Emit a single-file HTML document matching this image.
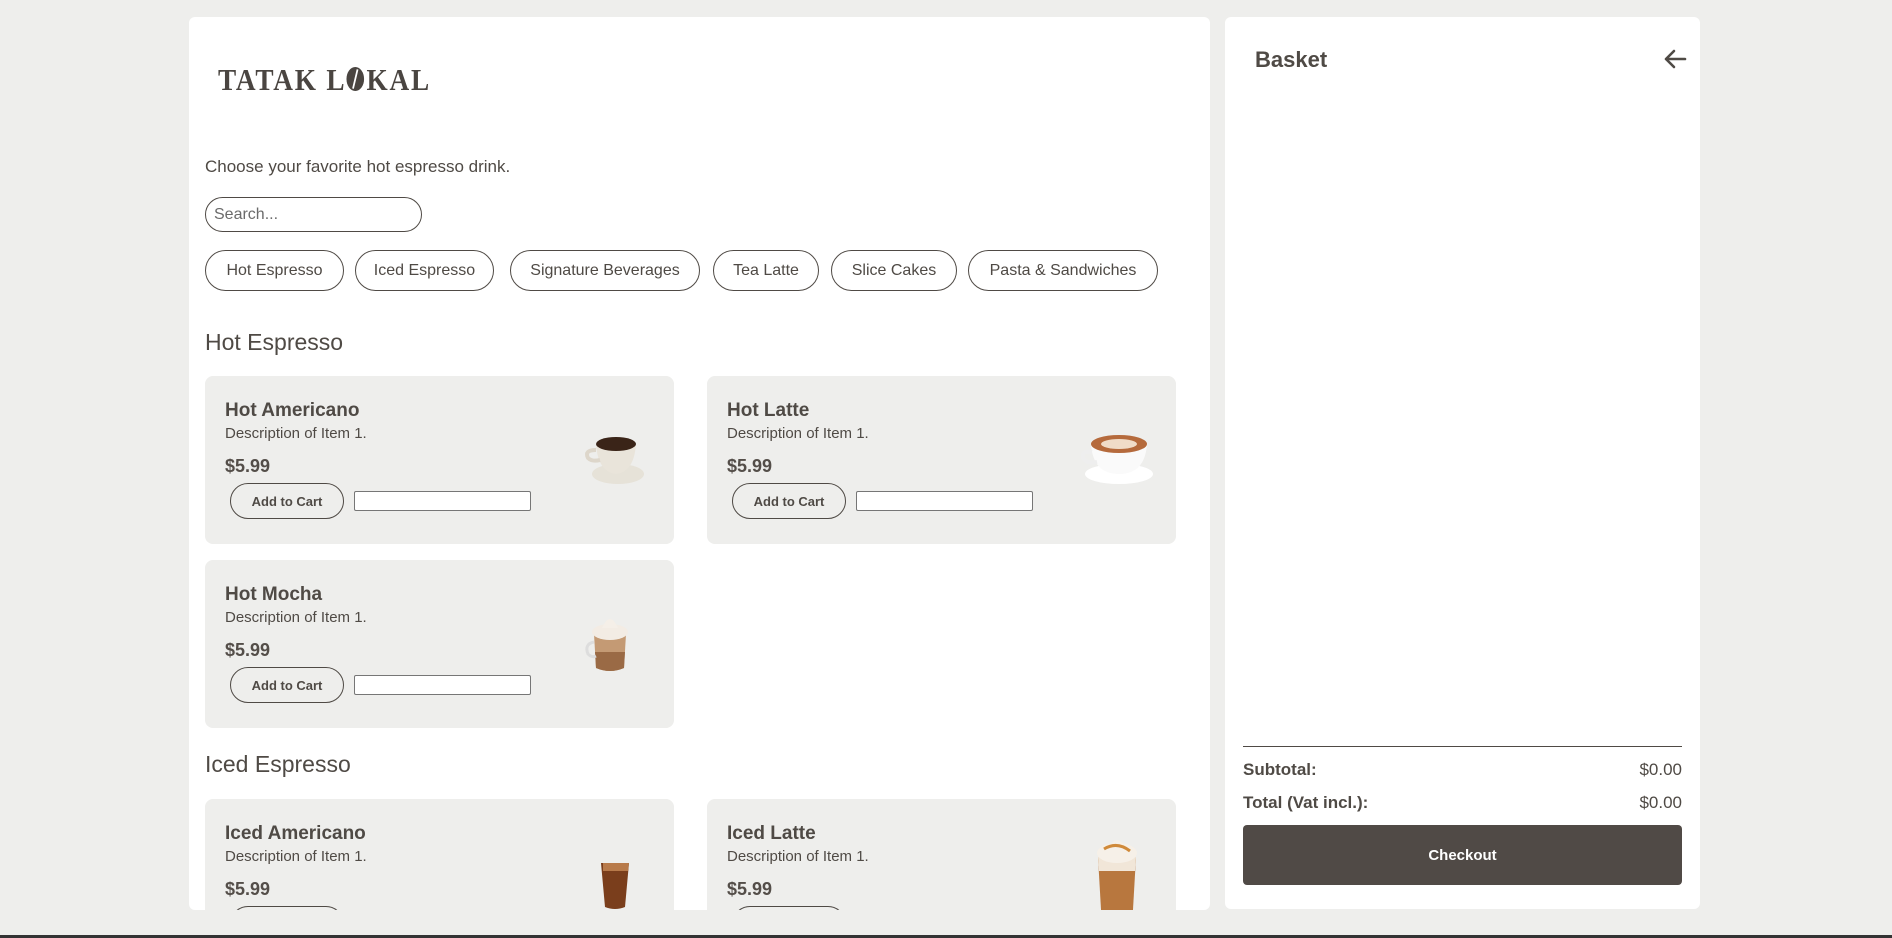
<!DOCTYPE html>
<html><head><meta charset="utf-8"><style>
*{box-sizing:border-box;margin:0;padding:0}
body{width:1892px;height:938px;background:#eeeeec;font-family:"Liberation Sans",sans-serif;color:#4f4a45;position:relative;overflow:hidden}
.abs{position:absolute}
.panel{position:absolute;background:#fff;border-radius:6px;overflow:hidden}
.logo{left:29px;top:45px;font-family:"Liberation Sans Narrow","Liberation Serif",serif;font-weight:bold;font-size:31px;letter-spacing:2px;transform:scaleX(.88);transform-origin:left;color:#4a4541}
.chip{position:absolute;top:233px;height:41px;border:1px solid #4f4a45;border-radius:21px;font-size:16px;display:flex;align-items:center;justify-content:center}
.h2{font-size:23px;font-weight:300;color:#4f4a45}
.card{position:absolute;width:469px;height:168px;background:#eeeeec;border-radius:8px}
.card .t{position:absolute;left:20px;top:24px;font-size:19px;font-weight:bold}
.card .d{position:absolute;left:20px;top:49px;font-size:15px;font-weight:300}
.card .p{position:absolute;left:20px;top:80px;font-size:18px;font-weight:bold;color:#544e49}
.card .b{position:absolute;left:25px;top:107px;width:114px;height:36px;border:1px solid #4f4a45;border-radius:18px;font-size:13px;font-weight:bold;display:flex;align-items:center;justify-content:center}
.card .i{position:absolute;left:149px;top:115px;width:177px;height:20px;background:#fff;border:1px solid #767676;border-radius:2px}
.card svg{position:absolute}
</style></head><body>
<div class="panel" style="left:189px;top:17px;width:1021px;height:893px">
  <div class="abs logo">TATAK L<span style="display:inline-block;width:20px;height:24px;background:#4a4541;border-radius:50%;vertical-align:-1px;margin-right:3px;position:relative"><span style="position:absolute;left:9px;top:2px;width:2px;height:20px;background:#fff;transform:rotate(15deg)"></span></span>KAL</div>
  <div class="abs" style="left:16px;top:140px;font-size:17px;font-weight:300">Choose your favorite hot espresso drink.</div>
  <div class="abs" style="left:16px;top:180px;width:217px;height:35px;border:1px solid #4f4a45;border-radius:18px;font-size:16px;color:#6b6b6b;padding:8px 0 0 8px">Search...</div>
  <div class="chip" style="left:16px;width:139px">Hot Espresso</div>
  <div class="chip" style="left:166px;width:139px">Iced Espresso</div>
  <div class="chip" style="left:321px;width:190px">Signature Beverages</div>
  <div class="chip" style="left:524px;width:106px">Tea Latte</div>
  <div class="chip" style="left:642px;width:126px">Slice Cakes</div>
  <div class="chip" style="left:779px;width:190px">Pasta &amp; Sandwiches</div>
  <div class="abs h2" style="left:16px;top:312px">Hot Espresso</div>

  <div class="card" style="left:16px;top:359px"><div class="t">Hot Americano</div><div class="d">Description of Item 1.</div><div class="p">$5.99</div><div class="b">Add to Cart</div><div class="i"></div>
   <svg style="left:375px;top:52px" width="70" height="64"><ellipse cx="38" cy="46" rx="26" ry="10" fill="#e6e2d8"/><path d="M16 16 Q18 44 36 46 Q54 44 56 16Z" fill="#e9e4da"/><ellipse cx="36" cy="16" rx="20" ry="7" fill="#3a2418"/><path d="M16 22 Q4 22 8 30 Q12 34 20 32" stroke="#ddd6ca" stroke-width="4" fill="none"/></svg></div>
  <div class="card" style="left:518px;top:359px"><div class="t">Hot Latte</div><div class="d">Description of Item 1.</div><div class="p">$5.99</div><div class="b">Add to Cart</div><div class="i"></div>
   <svg style="left:372px;top:50px" width="80" height="64"><ellipse cx="40" cy="48" rx="34" ry="10" fill="#fff"/><path d="M12 18 Q14 48 40 48 Q66 48 68 18Z" fill="#fafafa"/><ellipse cx="40" cy="18" rx="28" ry="9" fill="#b56a3c"/><ellipse cx="40" cy="18" rx="18" ry="5" fill="#f0dcc8"/><path d="M13 26 Q2 24 4 32 Q8 38 18 36" stroke="#eee" stroke-width="4" fill="none"/></svg></div>
  <div class="card" style="left:16px;top:543px"><div class="t">Hot Mocha</div><div class="d">Description of Item 1.</div><div class="p">$5.99</div><div class="b">Add to Cart</div><div class="i"></div>
   <svg style="left:375px;top:48px" width="60" height="70"><path d="M14 26 L16 60 Q30 66 44 60 L46 26Z" fill="#c49a74"/><path d="M15 44 L16 60 Q30 66 44 60 L45 44Z" fill="#9a6a45"/><ellipse cx="30" cy="24" rx="18" ry="8" fill="#f3ece4"/><path d="M22 20 Q30 2 38 20Z" fill="#f5efe8"/><path d="M14 34 Q4 36 8 46 Q12 50 16 48" stroke="#ddd" stroke-width="3" fill="none"/></svg></div>

  <div class="abs h2" style="left:16px;top:734px">Iced Espresso</div>
  <div class="card" style="left:16px;top:782px"><div class="t">Iced Americano</div><div class="d">Description of Item 1.</div><div class="p">$5.99</div><div class="b">Add to Cart</div><div class="i"></div>
   <svg style="left:390px;top:58px" width="40" height="56"><path d="M6 6 L10 50 Q20 54 30 50 L34 6Z" fill="#7a3e1c"/><path d="M8 6 L34 6 L33 14 L8 14Z" fill="#b87a4a"/></svg></div>
  <div class="card" style="left:518px;top:782px"><div class="t">Iced Latte</div><div class="d">Description of Item 1.</div><div class="p">$5.99</div><div class="b">Add to Cart</div><div class="i"></div>
   <svg style="left:385px;top:28px" width="50" height="100"><path d="M6 30 L10 100 L40 100 L44 30Z" fill="#b8773e"/><path d="M6 30 L44 30 L43 44 L7 44Z" fill="#f1e6d8"/><ellipse cx="25" cy="26" rx="20" ry="10" fill="#f6f0e8"/><path d="M16 22 Q25 4 34 22Z" fill="#f6f0e8"/><path d="M12 22 Q25 14 38 24" stroke="#d08a3a" stroke-width="3" fill="none"/></svg></div>
</div>

<div class="panel" style="left:1225px;top:17px;width:475px;height:892px">
  <div class="abs" style="left:30px;top:30px;font-size:22px;font-weight:bold">Basket</div>
  <svg class="abs" style="left:438px;top:31px" width="24" height="22" viewBox="0 0 24 22"><path d="M22 11H3M11 3L3 11L11 19" stroke="#4f4a45" stroke-width="2.6" fill="none" stroke-linecap="round" stroke-linejoin="round"/></svg>
  <div class="abs" style="left:18px;top:729px;width:439px;height:1px;background:#4f4a45"></div>
  <div class="abs" style="left:18px;top:743px;font-size:17px;font-weight:bold">Subtotal:</div>
  <div class="abs" style="right:18px;top:743px;font-size:17px;font-weight:300">$0.00</div>
  <div class="abs" style="left:18px;top:776px;font-size:17px;font-weight:bold">Total (Vat incl.):</div>
  <div class="abs" style="right:18px;top:776px;font-size:17px;font-weight:300">$0.00</div>
  <div class="abs" style="left:18px;top:808px;width:439px;height:60px;background:#504a46;border-radius:4px;color:#fff;font-size:15px;font-weight:bold;display:flex;align-items:center;justify-content:center">Checkout</div>
</div>
<div class="abs" style="left:0;top:935px;width:1892px;height:3px;background:#333"></div>
</body></html>
